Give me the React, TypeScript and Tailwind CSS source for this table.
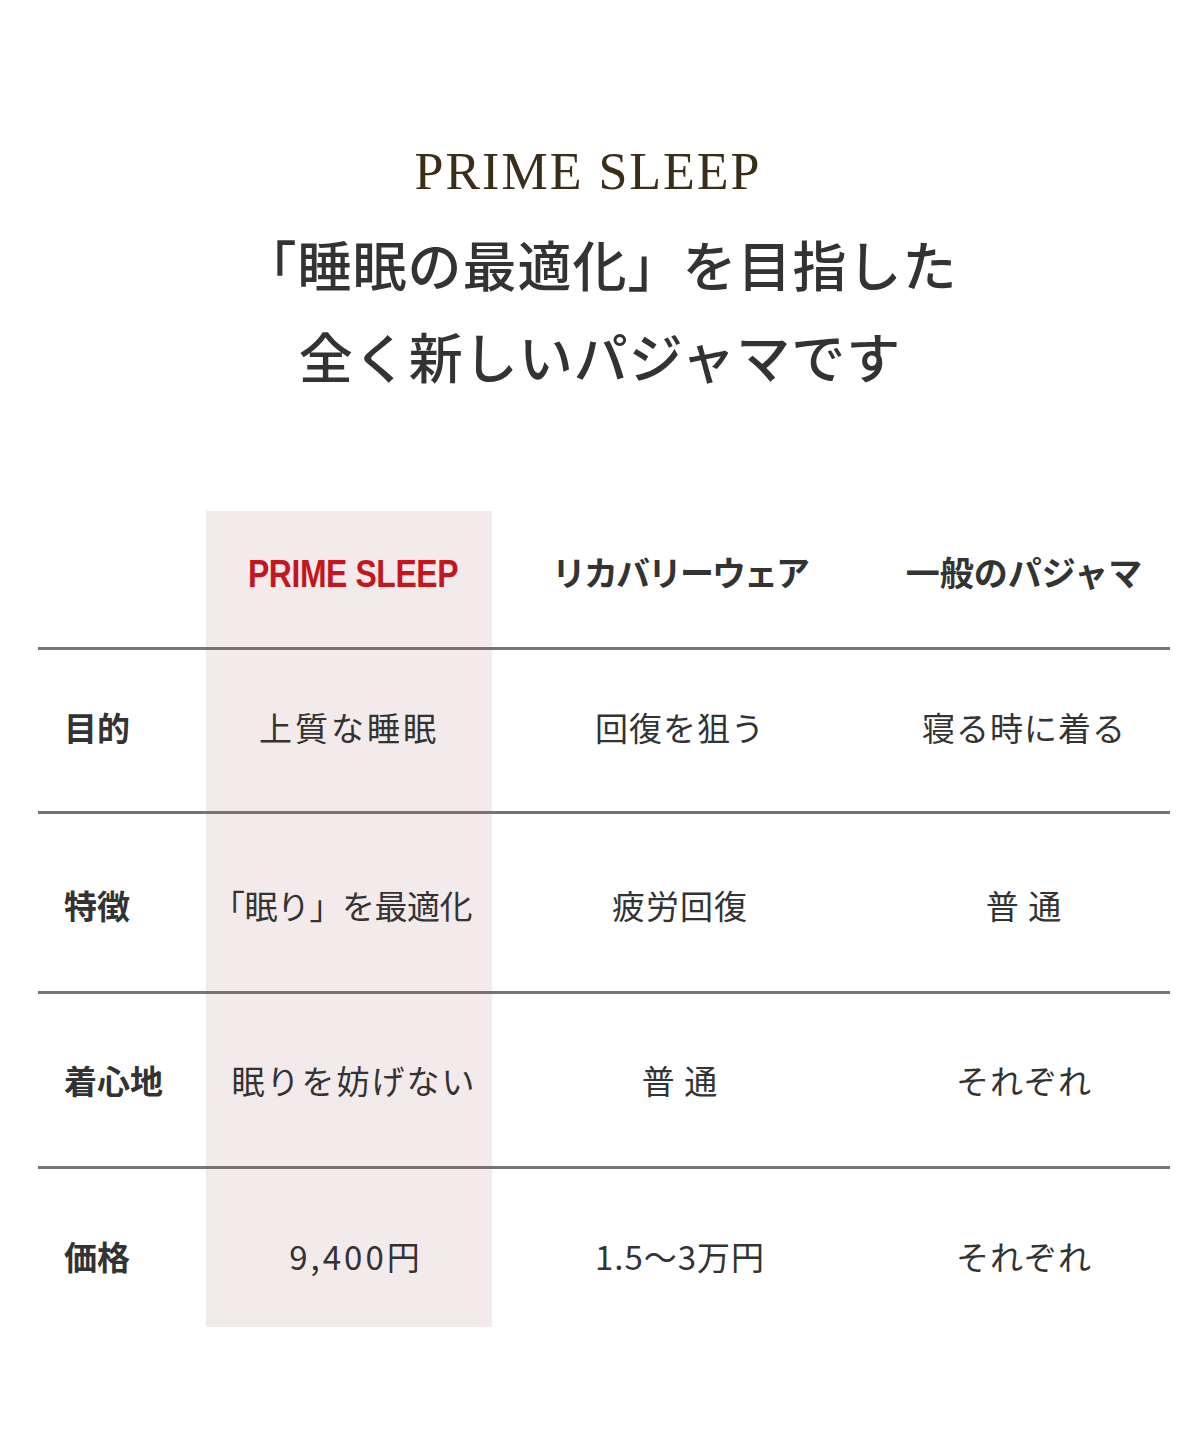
const jp = "font-['Noto_Sans_CJK_JP','Noto_Sans',sans-serif]"

const rows = [
    { label: '目的', prime: '上質な睡眠', primeCls: 'tracking-[3px]', recovery: '回復を狙う', normal: '寝る時に着る', h: 'h-[164px]', pt: 'pb-[6px]' },
    { label: '特徴', prime: '「眠り」を最適化', primeCls: 'tracking-[-0.5px] pr-[14px]', recovery: '疲労回復', normal: '普 通', h: 'h-[180px]', pt: 'pt-[6px]' },
    { label: '着心地', prime: '眠りを妨げない', primeCls: 'tracking-[2px] pl-[10px]', recovery: '普 通', normal: 'それぞれ', h: 'h-[175px]', pt: 'pt-[2px]' },
    { label: '価格', prime: '9,400円', primeCls: 'tracking-[3px] pl-[14px]', recovery: '1.5〜3万円', normal: 'それぞれ', h: 'h-[161px]', pt: 'pt-[18px]' },
]

export default function App() {
    return (
        <div className={`w-[1200px] h-[1440px] bg-white text-[#333333] ${jp}`}>
            {/* Title */}
            <div className="pt-[142px] text-center">
                <p className="pr-[24px] font-['Liberation_Serif',serif] text-[52px] leading-[60px] tracking-[2px] text-[#3b2e18]">
                    PRIME SLEEP
                </p>
                <h1 className="mt-[16px] text-[54px] leading-[92px] font-medium tracking-[1px]">
                    「睡眠の最適化」を目指した
                    <br />
                    全く新しいパジャマです
                </h1>
            </div>

            {/* Comparison table */}
            <div className="ml-[38px] mt-[109px] w-[1132px]">
                {/* Header */}
                <div className="grid grid-cols-[168px_286px_376px_302px] h-[136px]">
                    <div />
                    <div className="bg-[#f3eaeb] flex items-center justify-center pb-[10px] pl-[8px]">
                        <span className="inline-block scale-x-[0.84] font-['Liberation_Sans',sans-serif] font-bold text-[38px] text-[#c4161c] tracking-[-0.5px]">
                            PRIME SLEEP
                        </span>
                    </div>
                    <div className="flex items-center justify-center pb-[16px] text-[34px] font-bold tracking-[-2px]">
                        リカバリーウェア
                    </div>
                    <div className="flex items-center justify-center pb-[16px] pl-[10px] text-[34px] font-bold">
                        一般のパジャマ
                    </div>
                </div>

                {rows.map((row) => (
                    <div
                        key={row.label}
                        className={`grid grid-cols-[168px_286px_376px_302px] border-t-[3px] border-[#757575] ${row.h}`}
                    >
                        <div className={`flex items-center pl-[26px] text-[33px] font-bold ${row.pt}`}>
                            {row.label}
                        </div>
                        <div className={`bg-[#f3eaeb] flex items-center justify-center text-[33px] ${row.primeCls} ${row.pt}`}>
                            {row.prime}
                        </div>
                        <div className={`flex items-center justify-center text-[33px] tracking-[1px] ${row.pt}`}>
                            {row.recovery}
                        </div>
                        <div className={`flex items-center justify-center pl-[10px] text-[33px] tracking-[1px] ${row.pt}`}>
                            {row.normal}
                        </div>
                    </div>
                ))}
            </div>
        </div>
    )
}
